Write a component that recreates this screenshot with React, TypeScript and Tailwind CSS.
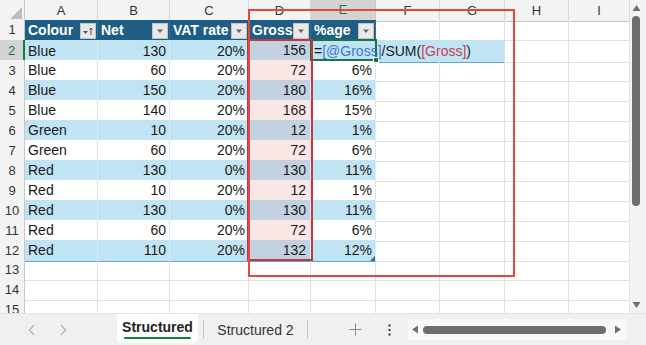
import React from 'react';

const COLS = 'grid grid-cols-[25px_73px_72px_79px_62px_65px_64px_65px_64px_61px]';
const LETTERS = ['A', 'B', 'C', 'D', 'E', 'F', 'G', 'H', 'I'];

const rows: [string, number, string, number, string][] = [
  ['Blue', 130, '20%', 156, '13%'],
  ['Blue', 60, '20%', 72, '6%'],
  ['Blue', 150, '20%', 180, '16%'],
  ['Blue', 140, '20%', 168, '15%'],
  ['Green', 10, '20%', 12, '1%'],
  ['Green', 60, '20%', 72, '6%'],
  ['Red', 130, '0%', 130, '11%'],
  ['Red', 10, '20%', 12, '1%'],
  ['Red', 130, '0%', 130, '11%'],
  ['Red', 60, '20%', 72, '6%'],
  ['Red', 110, '20%', 132, '12%'],
];

function DropBtn({ sort }: { sort?: boolean }) {
  return (
    <div className="w-[16px] h-[16px] mr-[1px] bg-[#e9e9e9] border border-[#c4c4c4] flex items-center justify-center shrink-0">
      {sort ? (
        <svg width="12" height="12" viewBox="0 0 12 12">
          <path d="M1 6h5l-2.5 3z" fill="#555" />
          <path d="M9 10V3M7.3 4.7 9 3l1.7 1.7" stroke="#555" strokeWidth="1" fill="none" />
        </svg>
      ) : (
        <svg width="10" height="10" viewBox="0 0 10 10">
          <path d="M2 3.5h6L5 7z" fill="#666" />
        </svg>
      )}
    </div>
  );
}

function HeadCell({ label, sort }: { label: string; sort?: boolean }) {
  return (
    <div className="bg-[#1f5e84] text-white font-bold flex items-center justify-between pl-[3px] border-r border-[#2f6e93]">
      <span>{label}</span>
      <DropBtn sort={sort} />
    </div>
  );
}

function RowHead({ n, active }: { n: number; active?: boolean }) {
  return (
    <div
      className={
        active
          ? 'bg-[#d3d3d3] text-[#107c41] border-r-2 border-[#107c41] border-b border-b-[#d6d6d6] flex items-center justify-center text-[13px]'
          : 'bg-[#f3f3f3] text-[#333] border-r border-[#c8c8c8] border-b border-b-[#e0e0e0] flex items-center justify-center text-[13px]'
      }
    >
      {n}
    </div>
  );
}

function Empty() {
  return <div className="border-r border-b border-[#e1e1e1]" />;
}

export default function App() {
  return (
    <div className="w-[646px] h-[345px] overflow-hidden bg-white text-[14px] text-[#1a1a1a] font-['Liberation_Sans_Narrow','Liberation_Sans',Arial,sans-serif]">
      <div className="flex h-[313px]">
        <div className="w-[630px] relative overflow-hidden">
          {/* column letters */}
          <div className={`${COLS} h-[20px]`}>
            <div className="bg-[#f3f3f3] border-r border-b border-[#c8c8c8] flex items-end justify-end p-[2px]">
              <svg width="12" height="12" viewBox="0 0 12 12">
                <path d="M12 0v12H0z" fill="#bdbdbd" />
              </svg>
            </div>
            {LETTERS.map((l) =>
              l === 'E' ? (
                <div key={l} className="bg-[#d3d3d3] text-[#107c41] border-r border-[#c8c8c8] border-b-2 border-b-[#107c41] flex items-center justify-center text-[13px]">
                  {l}
                </div>
              ) : (
                <div key={l} className="bg-[#f3f3f3] text-[#333] border-r border-b border-[#d6d6d6] border-b-[#c8c8c8] flex items-center justify-center text-[13px]">
                  {l}
                </div>
              )
            )}
          </div>

          {/* table header */}
          <div className={`${COLS} h-[20px]`}>
            <RowHead n={1} />
            <HeadCell label="Colour" sort />
            <HeadCell label="Net" />
            <HeadCell label="VAT rate" />
            <HeadCell label="Gross" />
            <HeadCell label="%age" />
            <Empty />
            <Empty />
            <Empty />
            <Empty />
          </div>

          {/* data rows */}
          {rows.map((r, i) => {
            const band = i % 2 === 0;
            const line = `border-b border-[#5fa6d4] border-r ${band ? 'border-r-[#d8eef9]' : 'border-r-[#e3e3e3]'} flex items-center`;
            const bg = band ? 'bg-[#c1e4f5]' : 'bg-white';
            const dFill = band ? 'bg-[#c2d2e1]' : 'bg-[#fbe6e6]';
            return (
              <div key={i} className={`${COLS} h-[20px]`}>
                <RowHead n={i + 2} active={i === 0} />
                <div className={`${bg} ${line} pl-[3px]`}>{r[0]}</div>
                <div className={`${bg} ${line} justify-end pr-[3px]`}>{r[1]}</div>
                <div className={`${bg} ${line} justify-end pr-[3px]`}>{r[2]}</div>
                <div className={`${dFill} ${line} justify-end pr-[4px] ${i === 0 ? 'border-b-2 border-b-[#3f66c4]' : ''}`}>{r[3]}</div>
                {i === 0 ? (
                  <div className="col-span-3 bg-[#c1e4f5] border-b border-[#5fa6d4] flex items-center pl-[3px] whitespace-nowrap">
                    <span>=</span>
                    <span className="text-[#3f74d0]">[@Gross]</span>
                    <span>/SUM(</span>
                    <span className="text-[#c8414b]">[Gross]</span>
                    <span>)</span>
                  </div>
                ) : (
                  <>
                    <div className={`${bg} ${line} justify-end pr-[3px] relative`}>
                      {r[4]}
                      {i === rows.length - 1 && (
                        <div className="absolute right-0 bottom-0 w-0 h-0 border-l-[5px] border-l-transparent border-b-[5px] border-b-[#3a5fbf]" />
                      )}
                    </div>
                    <Empty />
                    <Empty />
                  </>
                )}
                <Empty />
                <Empty />
              </div>
            );
          })}

          {/* empty rows */}
          {[13, 14, 15].map((n) => (
            <div key={n} className={`${COLS} h-[20px]`}>
              <RowHead n={n} />
              {LETTERS.map((l) => (
                <Empty key={l} />
              ))}
            </div>
          ))}

          {/* active cell E2 */}
          <div className="absolute left-[310px] top-[39px] w-[67px] h-[22px] border-2 border-[#1e7145]" />
          <div className="absolute left-[373px] top-[57px] w-[6px] h-[6px] bg-[#1e7145] border border-white" />

          {/* highlight boxes */}
          <div className="absolute left-[247px] top-[39px] w-[66px] h-[222px] border-2 border-[#c4363b]" />
          <div className="absolute left-[248px] top-[9px] w-[267px] h-[268px] border-2 border-[#e4473f]" />
        </div>

        {/* vertical scrollbar */}
        <div className="w-[16px] bg-[#f3f3f3] flex flex-col items-start pl-[2px]">
          <svg width="9" height="8" viewBox="0 0 9 8" className="mt-[4px]">
            <path d="M0.5 7h8L4.5 1z" fill="#6e6e6e" />
          </svg>
          <div className="w-[8px] h-[190px] mt-[4px] rounded-[4px] bg-[#6e6e6e]" />
          <div className="flex-1" />
          <svg width="9" height="8" viewBox="0 0 9 8" className="mb-[4px]">
            <path d="M0.5 1h8L4.5 7z" fill="#6e6e6e" />
          </svg>
        </div>
      </div>

      {/* sheet tabs */}
      <div className="h-[32px] bg-[#f0f0f0] flex items-stretch border-t border-[#e4e4e4] text-[14px]">
        <div className="ml-[22px] w-[20px] flex items-center justify-center">
          <svg width="8" height="12" viewBox="0 0 8 12">
            <path d="M6 1 1.5 6 6 11" stroke="#b3b3b3" strokeWidth="1.3" fill="none" />
          </svg>
        </div>
        <div className="ml-[11px] w-[20px] flex items-center justify-center">
          <svg width="8" height="12" viewBox="0 0 8 12">
            <path d="M2 1l4.5 5L2 11" stroke="#b3b3b3" strokeWidth="1.3" fill="none" />
          </svg>
        </div>
        <div className="ml-[44px] w-[81px] mb-[2px] bg-white rounded-b-[5px] flex flex-col items-center justify-center">
          <span className="font-bold text-[#222] leading-[16px]">Structured</span>
          <div className="w-[67px] h-[2px] mt-[2px] bg-[#107c41] rounded-full" />
        </div>
        <div className="ml-[5px] my-[6px] w-px bg-[#c6c6c6]" />
        <div className="w-[103px] flex items-center justify-center text-[#333] pt-[1px]">Structured 2</div>
        <div className="my-[6px] w-px bg-[#c6c6c6]" />
        <div className="ml-[35px] w-[24px] flex items-center justify-center">
          <svg width="13" height="13" viewBox="0 0 13 13">
            <path d="M6.5 0.5v12M0.5 6.5h12" stroke="#8a8a8a" strokeWidth="1" fill="none" />
          </svg>
        </div>
        <div className="ml-[12px] w-[20px] flex items-center justify-center">
          <svg width="3" height="12" viewBox="0 0 3 12">
            <rect x="0.5" y="0.5" width="2" height="2" fill="#333" />
            <rect x="0.5" y="5" width="2" height="2" fill="#333" />
            <rect x="0.5" y="9.5" width="2" height="2" fill="#333" />
          </svg>
        </div>
        <div className="ml-[9px] w-[218px] my-[5px] bg-[#f8f8f8] flex items-center">
          <svg width="8" height="9" viewBox="0 0 8 9" className="ml-[3px]">
            <path d="M7 0.5v8L1 4.5z" fill="#6e6e6e" />
          </svg>
          <div className="ml-[4px] w-[183px] h-[8px] rounded-[4px] bg-[#6e6e6e]" />
          <svg width="8" height="9" viewBox="0 0 8 9" className="ml-[8px]">
            <path d="M1 0.5v8L7 4.5z" fill="#6e6e6e" />
          </svg>
        </div>
      </div>
    </div>
  );
}
